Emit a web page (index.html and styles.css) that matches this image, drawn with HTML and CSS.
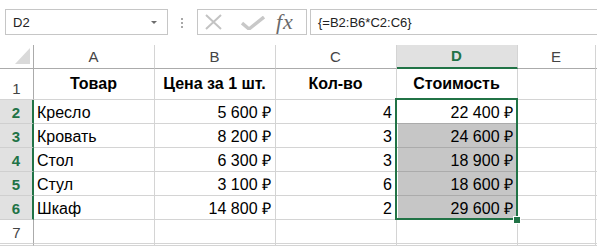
FILE: index.html
```html
<!DOCTYPE html>
<html lang="ru">
<head>
    <meta charset="UTF-8">
    <meta name="viewport" content="width=device-width, initial-scale=1.0">
    <title>Стоимость - Excel</title>
    <link rel="stylesheet" href="styles.css">
</head>
<body>
    <div class="fbar">
        <div class="namebox">
            <span>D2</span>
            <span class="drop"></span>
        </div>
        <div class="grip"><i></i><i></i><i></i></div>
        <div class="btns">
            <svg class="ico-x" width="17" height="16" viewBox="0 0 17 16">
                <path d="M1 1 L16 15 M16 1 L1 15" stroke="#c3c3c3" stroke-width="2" fill="none"/>
            </svg>
            <svg class="ico-ok" width="24" height="14" viewBox="0 0 24 14">
                <path d="M1 7 L8 13 L23 1" stroke="#c8c8c8" stroke-width="3.4" fill="none"/>
            </svg>
            <span class="fx">fx</span>
        </div>
        <div class="formula">{=B2:B6*C2:C6}</div>
    </div>

    <div class="sheet">
        <div class="cell corner"><span></span></div>
        <div class="cell ch">A</div>
        <div class="cell ch">B</div>
        <div class="cell ch">C</div>
        <div class="cell ch on">D</div>
        <div class="cell ch">E</div>
        <div class="cell ch"></div>

        <div class="cell rh">1</div>
        <div class="cell hd">Товар</div>
        <div class="cell hd">Цена за 1 шт.</div>
        <div class="cell hd">Кол-во</div>
        <div class="cell hd">Стоимость</div>
        <div class="cell"></div>
        <div class="cell"></div>

        <div class="cell rh on">2</div>
        <div class="cell">Кресло</div>
        <div class="cell num">5 600 ₽</div>
        <div class="cell num">4</div>
        <div class="cell num active">22 400 ₽</div>
        <div class="cell"></div>
        <div class="cell"></div>

        <div class="cell rh on">3</div>
        <div class="cell">Кровать</div>
        <div class="cell num">8 200 ₽</div>
        <div class="cell num">3</div>
        <div class="cell num hl">24 600 ₽</div>
        <div class="cell"></div>
        <div class="cell"></div>

        <div class="cell rh on">4</div>
        <div class="cell">Стол</div>
        <div class="cell num">6 300 ₽</div>
        <div class="cell num">3</div>
        <div class="cell num hl">18 900 ₽</div>
        <div class="cell"></div>
        <div class="cell"></div>

        <div class="cell rh on">5</div>
        <div class="cell">Стул</div>
        <div class="cell num">3 100 ₽</div>
        <div class="cell num">6</div>
        <div class="cell num hl">18 600 ₽</div>
        <div class="cell"></div>
        <div class="cell"></div>

        <div class="cell rh on">6</div>
        <div class="cell">Шкаф</div>
        <div class="cell num">14 800 ₽</div>
        <div class="cell num">2</div>
        <div class="cell num hl">29 600 ₽</div>
        <div class="cell"></div>
        <div class="cell"></div>

        <div class="cell rh">7</div>
        <div class="cell"></div>
        <div class="cell"></div>
        <div class="cell"></div>
        <div class="cell"></div>
        <div class="cell"></div>
        <div class="cell"></div>

        <div class="cell rh"></div>
        <div class="cell"></div>
        <div class="cell"></div>
        <div class="cell"></div>
        <div class="cell"></div>
        <div class="cell"></div>
        <div class="cell"></div>

        <div class="sel"></div>
        <div class="handle"></div>
    </div>
</body>
</html>
```

FILE: styles.css
```css
body {
    margin: 0;
    font-family: "Liberation Sans", Arial, sans-serif;
    background-color: #fff;
    color: #000;
    overflow: hidden;
}
.fbar {
    display: flex;
    align-items: flex-start;
    height: 45px;
    padding: 9px 0 0 5px;
    box-sizing: border-box;
}
.namebox {
    width: 163px;
    height: 26px;
    box-sizing: border-box;
    border: 1px solid #c6c6c6;
    display: flex;
    align-items: center;
    justify-content: space-between;
    padding: 0 10px 0 7px;
    font-size: 13px;
    color: #222;
}
.drop {
    width: 0;
    height: 0;
    border-left: 3px solid transparent;
    border-right: 3px solid transparent;
    border-top: 3px solid #6d6d6d;
}
.grip {
    width: 29px;
    display: flex;
    flex-direction: column;
    gap: 2px;
    padding: 9px 0 0 13px;
    box-sizing: border-box;
}
.grip i {
    display: block;
    width: 2px;
    height: 2px;
    background-color: #a8a8a8;
}
.btns {
    width: 110px;
    height: 26px;
    box-sizing: border-box;
    border: 1px solid #c6c6c6;
    display: flex;
    align-items: center;
}
.ico-x {
    margin-left: 7px;
}
.ico-ok {
    margin-left: 19px;
    margin-top: 1px;
}
.fx {
    margin-left: 11px;
    font-family: "Liberation Serif", "Times New Roman", serif;
    font-style: italic;
    font-size: 22px;
    letter-spacing: 1px;
    color: #6a6a6a;
    line-height: 22px;
}
.formula {
    flex: 1;
    margin-left: 3px;
    height: 26px;
    box-sizing: border-box;
    border: 1px solid #c6c6c6;
    border-right: none;
    padding-left: 7px;
    display: flex;
    align-items: center;
    font-size: 13px;
    color: #222;
}

.sheet {
    position: relative;
    display: grid;
    grid-template-columns: 34px 121px 121px 121px 121px 78px 1fr;
    grid-template-rows: 24px 31px repeat(6, 24px) 2px;
}
.cell {
    box-sizing: border-box;
    border-right: 1px solid #d4d4d4;
    border-bottom: 1px solid #d4d4d4;
    display: flex;
    align-items: flex-end;
    padding: 0 4px 0 3px;
    font-size: 16px;
    line-height: 20px;
    white-space: nowrap;
    overflow: hidden;
}
.corner {
    justify-content: flex-end;
    padding: 0 3px 4px 0;
    border-bottom-color: #ababab;
    border-right-color: #ababab;
}
.corner span {
    width: 15px;
    height: 16px;
    background-color: #dadada;
    clip-path: polygon(100% 0, 100% 100%, 0 100%);
}
.ch {
    justify-content: center;
    align-items: center;
    font-size: 15px;
    color: #444;
    border-bottom-color: #ababab;
}
.ch.on {
    background-color: #e1e1e1;
    color: #217346;
    font-weight: bold;
    border-bottom: 2px solid #217346;
}
.rh {
    justify-content: center;
    padding: 0;
    font-size: 15px;
    color: #444;
    border-right-color: #ababab;
}
.rh.on {
    background-color: #e1e1e1;
    color: #217346;
    font-weight: bold;
    border-right: 2px solid #217346;
    border-bottom-color: #cfcfcf;
}
.hd {
    justify-content: center;
    align-items: center;
    font-weight: bold;
}
.num {
    justify-content: flex-end;
}
.active {
    border-bottom-color: #ababab;
}
.hl {
    background-color: #c6c6c6;
    border-bottom-color: #ababab;
    box-shadow: inset 1px 0 0 #fff;
}
.sel {
    position: absolute;
    left: 395px;
    top: 53px;
    width: 123px;
    height: 122px;
    box-sizing: border-box;
    border: 2px solid #217346;
}
.handle {
    position: absolute;
    left: 513px;
    top: 171px;
    width: 8px;
    height: 8px;
    box-sizing: border-box;
    background-color: #217346;
    border: 1px solid #fff;
}
```
